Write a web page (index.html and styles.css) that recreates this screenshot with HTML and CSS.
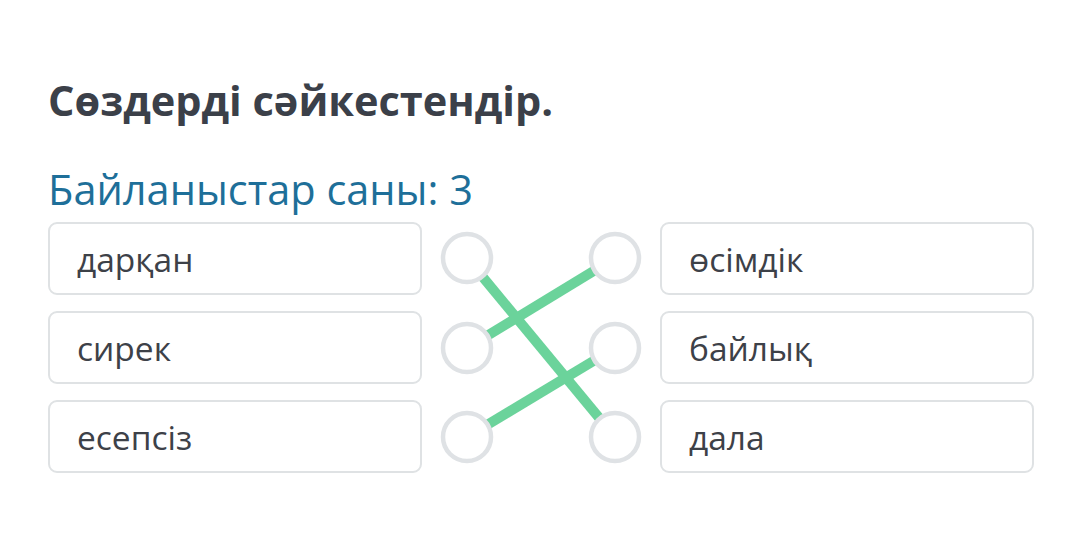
FILE: index.html
```html
<!DOCTYPE html>
<html lang="kk">
<head>
<meta charset="utf-8">
<link rel="stylesheet" href="styles.css">
</head>
<body>
<main class="task">
  <h1 class="title">Сөздерді сәйкестендір.</h1>
  <p class="count">Байланыстар саны: 3</p>
  <div class="match">
    <div class="col">
      <div class="item">дарқан</div>
      <div class="item">сирек</div>
      <div class="item">есепсіз</div>
    </div>
    <svg class="links" width="238" height="251" viewBox="0 0 238 251">
      <g stroke="#6bd39b" stroke-width="10" stroke-linecap="butt">
        <line x1="45" y1="36" x2="193" y2="215"/>
        <line x1="45" y1="126" x2="193" y2="36"/>
        <line x1="45" y1="215" x2="193" y2="126"/>
      </g>
      <g fill="#fff" stroke="#dfe2e5" stroke-width="4.5">
        <circle cx="45" cy="36" r="24"/>
        <circle cx="45" cy="126" r="24"/>
        <circle cx="45" cy="215" r="24"/>
        <circle cx="193" cy="36" r="24"/>
        <circle cx="193" cy="126" r="24"/>
        <circle cx="193" cy="215" r="24"/>
      </g>
    </svg>
    <div class="col">
      <div class="item">өсімдік</div>
      <div class="item">байлық</div>
      <div class="item">дала</div>
    </div>
  </div>
</main>
</body>
</html>
```

FILE: styles.css
```css
html, body {
  margin: 0;
  padding: 0;
  background: #ffffff;
}
body {
  font-family: "Open Sans", "Noto Sans", sans-serif;
}
.task {
  padding: 70px 46px 0 48px;
}
.title {
  margin: 0;
  font-size: 41.5px;
  line-height: 60px;
  font-weight: 700;
  color: #3b4049;
}
.count {
  margin: 34px 0 0;
  font-size: 41.5px;
  line-height: 50px;
  font-weight: 400;
  color: #1e6f99;
}
.match {
  margin-top: 8px;
  display: flex;
  align-items: flex-start;
}
.col {
  width: 374px;
  display: flex;
  flex-direction: column;
  gap: 16px;
}
.item {
  box-sizing: border-box;
  height: 73px;
  border: 2px solid #dfe2e4;
  border-radius: 9px;
  padding: 0 27px;
  display: flex;
  align-items: center;
  font-size: 33.5px;
  color: #3d4148;
}
.links {
  flex: none;
  display: block;
}
```
